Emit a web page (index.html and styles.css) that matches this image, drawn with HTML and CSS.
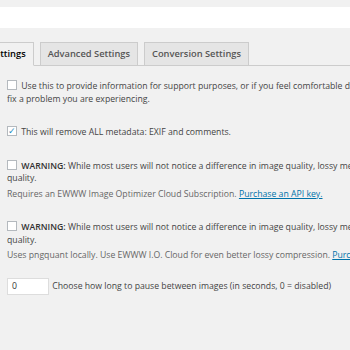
FILE: index.html
```html
<!DOCTYPE html>
<html>
    <head>
        <title> EWWW Image Optimizer Settings </title>
        <link rel="stylesheet" href="styles.css">
    </head>
    <body>
        <div class="topbar"></div>

        <div class="tabs">
            <span class="tab tab-active">Basic Settings</span>
            <span class="tab">Advanced Settings</span>
            <span class="tab">Conversion Settings</span>
        </div>

        <div class="settings">
            <div class="row row-first">
                <span class="box"></span> Use this to provide information for support purposes, or if you feel comfortable digging around<br>fix a problem you are experiencing.
            </div>

            <div class="row">
                <span class="box"><span class="check">&#10003;</span></span> This will remove ALL metadata: EXIF and comments.
            </div>

            <div class="row">
                <span class="box"></span> <b>WARNING:</b> While most users will not notice a difference in image quality, lossy means<br>quality.
                <p class="desc">Requires an EWWW Image Optimizer Cloud Subscription. <a class="link" href="#">Purchase an API key.</a></p>
            </div>

            <div class="row">
                <span class="box"></span> <b>WARNING:</b> While most users will not notice a difference in image quality, lossy means<br>quality.
                <p class="desc">Uses pngquant locally. Use EWWW I.O. Cloud for even better lossy compression. <a class="link" href="#">Purchase</a></p>
            </div>

            <div class="row row-input">
                <span class="numbox">0</span> Choose how long to pause between images (in seconds, 0 = disabled)
            </div>
        </div>
    </body>
</html>
```
FILE: styles.css
```css
body{
    margin:0;
    background-color:#f1f1f1;
    color:#444;
    font-family:"Open Sans", Arial, sans-serif;
    font-size:8.7px;
    overflow:hidden;
    width:350px;
    height:350px;
}

.topbar{
    margin-top:7px;
    height:21px;
    background-color:white;
}

.tabs{
    display:flex;
    margin-top:14px;
    margin-left:-44px;
    border-bottom:1px solid #ccc;
    height:23px;
}

.tab{
    display:block;
    box-sizing:border-box;
    height:24px;
    padding:0 7px;
    margin-right:6px;
    line-height:22px;
    font-size:9.3px;
    font-weight:600;
    color:#555;
    background-color:#e5e5e5;
    border:1px solid #ccc;
    white-space:nowrap;
}

.tab-active{
    background-color:#f1f1f1;
    color:#000;
    border-bottom-color:#f1f1f1;
}

.settings{
    padding-left:7px;
    white-space:nowrap;
    line-height:12.5px;
}

.row{
    margin-top:21px;
}

.row-first{
    margin-top:14px;
}

.box{
    display:inline-block;
    box-sizing:border-box;
    width:10px;
    height:10px;
    border:1px solid #b4b9be;
    background-color:white;
    vertical-align:-1px;
    margin-right:2px;
    position:relative;
}

.check{
    position:absolute;
    left:0;
    top:-2px;
    font-size:9px;
    line-height:12px;
    color:#1e8cbe;
}

b{
    font-weight:600;
    color:#333;
}

.desc{
    margin:3px 0 0 0;
    color:#666;
}

.link{
    color:#0073aa;
}

.row-input{
    margin-top:16px;
}

.numbox{
    display:inline-block;
    box-sizing:border-box;
    width:42px;
    height:17px;
    line-height:15px;
    padding-left:4px;
    margin-right:1px;
    background-color:white;
    border:1px solid #ddd;
    color:#333;
    vertical-align:middle;
}
```
